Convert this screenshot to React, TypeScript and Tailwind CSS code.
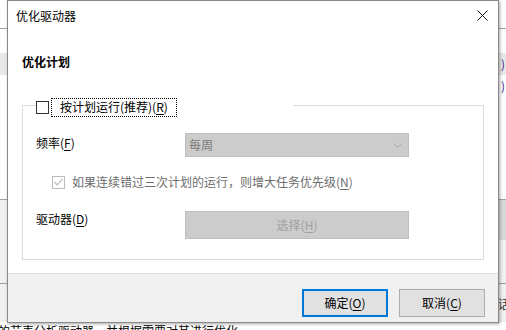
const U = ({ children }: { children: string }) => <span className="underline underline-offset-2">{children}</span>;

export default function App() {
  return (
    <div className="relative w-[506px] h-[330px] overflow-hidden bg-white font-['Noto_Sans_CJK_SC','Microsoft_YaHei',sans-serif] text-[12px] leading-[16px] text-black">
      {/* window behind the dialog */}
      <div className="flex flex-col w-full *:shrink-0">
        <div className="h-[28px] bg-white" />
        <div className="h-px bg-[#a0a0a0]" />
        <div className="h-[24px] bg-white" />
        <div className="h-[22px] bg-[#e8e8e8] flex items-center justify-end pr-[1px] text-[#3c1d8c]">)</div>
        <div className="h-[124px] bg-white flex justify-end pr-[1px] pt-[3px] text-[#3c1d8c]">)</div>
        <div className="h-px bg-[#a0a0a0]" />
        <div className="h-[40px] flex bg-[#f0f0f0]">
          <div className="flex-1" />
          <div className="w-[8px] bg-[#d9d9d9]" />
        </div>
        <div className="h-[43px] bg-[#f0f0f0]" />
        <div className="h-px bg-[#a0a0a0]" />
        <div className="h-[38px] bg-[#f0f0f0] flex justify-end items-start pt-[12px] -mr-[4px] text-[#333]">话</div>
        <div className="h-[16px] bg-white whitespace-nowrap -ml-[2px] pt-[1px]">的节表分析驱动器，并根据需要对其进行优化。</div>
      </div>

      {/* dialog */}
      <div className="absolute left-[7px] top-0 w-[492px] h-[323px] flex flex-col bg-white border border-[#8a8a8a] shadow-[1px_1px_3px_rgba(0,0,0,0.35)]">
        <div className="h-[29px] flex items-center justify-between pl-[8px] pr-[10px]">
          <span>优化驱动器</span>
          <svg width="11" height="11" viewBox="0 0 11 11" className="mb-[1px]">
            <path d="M0.5 0.5 L10.5 10.5 M10.5 0.5 L0.5 10.5" stroke="#111" strokeWidth="1" fill="none" />
          </svg>
        </div>

        <div className="flex-1 px-[14px] pt-[24px]">
          <div className="font-bold">优化计划</div>

          <div className="relative mt-[35px] h-[155px] border border-[#dcdcdc] pl-[13px]">
            <div className="absolute left-[13px] -top-[8px] w-[257px] h-[18px] bg-white flex items-center">
              <div className="w-[13px] h-[13px] border border-[#333] bg-white" />
              <div className="ml-[2px] h-[19px] px-[8px] flex items-center border border-dotted border-black">
                按计划运行(推荐)(<U>R</U>)
              </div>
            </div>

            <div className="flex items-start mt-[27px]">
              <div className="w-[149px] mt-[2px]">
                频率(<U>F</U>)
              </div>
              <div className="w-[224px] h-[24px] bg-[#cccccc] border border-[#bfbfbf] flex items-center justify-between pl-[3px] pr-[6px] text-[#7a7a7a]">
                <span>每周</span>
                <svg width="9" height="5" viewBox="0 0 9 5">
                  <path d="M0.5 0.5 L4.5 4.5 L8.5 0.5" stroke="#a8a8a8" strokeWidth="1" fill="none" />
                </svg>
              </div>
            </div>

            <div className="flex items-center mt-[17px] pl-[16px] text-[#6d6d6d]">
              <div className="w-[13px] h-[13px] border border-[#bcbcbc] bg-white flex items-center justify-center">
                <svg width="9" height="8" viewBox="0 0 9 8">
                  <path d="M0.5 4 L3.2 6.8 L8.5 0.8" stroke="#bcbcbc" strokeWidth="1.2" fill="none" />
                </svg>
              </div>
              <span className="ml-[7px]">
                如果连续错过三次计划的运行，则增大任务优先级(<U>N</U>)
              </span>
            </div>

            <div className="flex items-start mt-[21px]">
              <div className="w-[149px]">
                驱动器(<U>D</U>)
              </div>
              <div className="w-[224px] h-[28px] bg-[#cccccc] border border-[#bfbfbf] flex items-center justify-center text-[#a0a0a0]">
                <span>
                  选择(<U>H</U>)
                </span>
              </div>
            </div>
          </div>
        </div>

        <div className="h-[49px] bg-[#f0f0f0] border-t border-[#dfdfdf] flex justify-end items-start pt-[15px] pr-[13px] gap-[11px]">
          <div className="w-[86px] h-[28px] bg-[#e1e1e1] border-2 border-[#0078d7] flex items-center justify-center">
            <span>
              确定(<U>O</U>)
            </span>
          </div>
          <div className="w-[86px] h-[28px] bg-[#e1e1e1] border border-[#adadad] flex items-center justify-center">
            <span>
              取消(<U>C</U>)
            </span>
          </div>
        </div>
      </div>
    </div>
  );
}
